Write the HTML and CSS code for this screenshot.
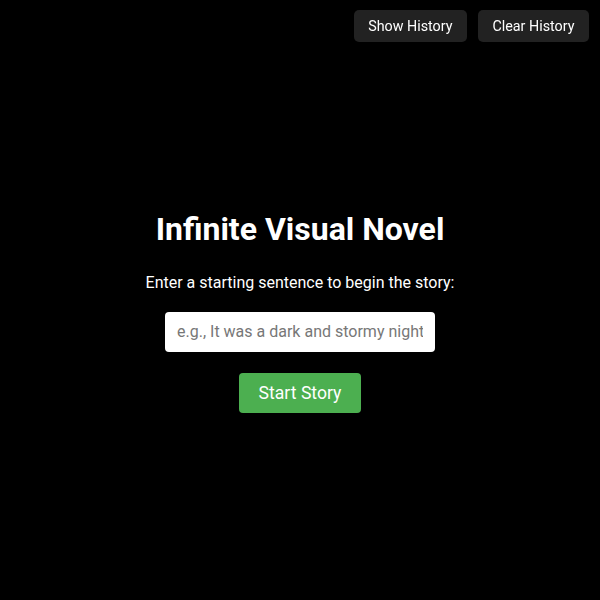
FILE: index.html
```html
<!DOCTYPE html>
<html lang="en">
<head>
<meta charset="utf-8">
<title>Infinite Visual Novel</title>
<link rel="stylesheet" href="styles.css">
</head>
<body>
<div class="toolbar">
  <button class="tool-btn">Show History</button>
  <button class="tool-btn">Clear History</button>
</div>
<main class="start">
  <h1 class="title">Infinite Visual Novel</h1>
  <p class="prompt">Enter a starting sentence to begin the story:</p>
  <input class="sentence" type="text" placeholder="e.g., It was a dark and stormy night">
  <button class="start-btn">Start Story</button>
</main>
</body>
</html>
```
FILE: styles.css
```css
html, body {
  margin: 0;
  height: 100%;
  background: #000;
  color: #fff;
  font-family: Roboto, "Liberation Sans", sans-serif;
}
.toolbar {
  position: fixed;
  top: 10px;
  right: 11px;
  display: flex;
  gap: 11px;
}
.tool-btn {
  font-family: inherit;
  font-size: 14.3px;
  color: #fff;
  background: #222;
  border: none;
  border-radius: 5px;
  height: 32px;
  padding: 0 14.5px;
}
.start {
  box-sizing: border-box;
  height: 100%;
  padding-top: 22px;
  display: flex;
  flex-direction: column;
  align-items: center;
  justify-content: center;
}
.title {
  font-size: 32px;
  font-weight: 700;
  margin: 0 0 25px;
}
.prompt {
  font-size: 16px;
  margin: 0 0 20px;
}
.sentence {
  box-sizing: border-box;
  width: 270px;
  height: 40px;
  padding: 0 12px;
  font-family: inherit;
  font-size: 16px;
  border: none;
  border-radius: 4px;
  background: #fff;
  color: #000;
}
.sentence::placeholder {
  color: #777;
}
.start-btn {
  margin-top: 21px;
  width: 122px;
  height: 40px;
  font-family: inherit;
  font-size: 17.6px;
  color: #fff;
  background: #4caf50;
  border: none;
  border-radius: 4px;
}
```
